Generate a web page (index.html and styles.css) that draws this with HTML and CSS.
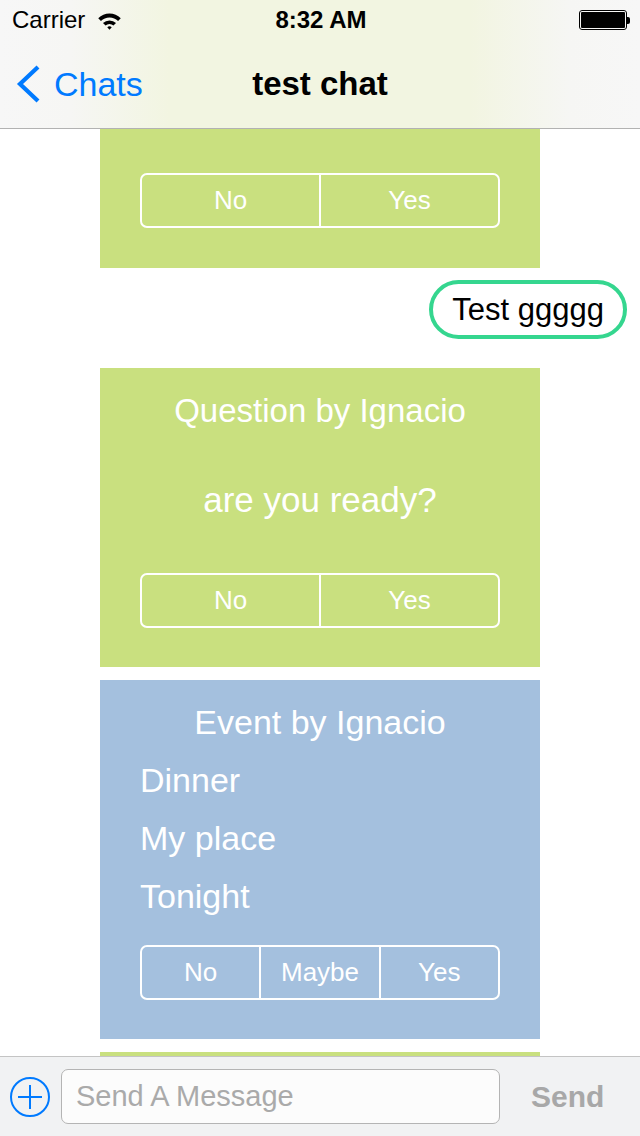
FILE: index.html
```html
<!DOCTYPE html>
<html>
<head>
    <meta charset="utf-8">
    <title>test chat</title>
    <link rel="stylesheet" href="styles.css">
</head>
<body>
<div class="phone">

    <div class="topbar">
        <div class="status">
            <div class="status-left">
                <span>Carrier</span>
                <svg class="wifi" width="25" height="18" viewBox="0 0 22 16">
                    <path d="M1 5.5 A14 14 0 0 1 21 5.5 L18.6 8 A10.6 10.6 0 0 0 3.4 8 Z" fill="#000"/>
                    <path d="M5.2 9.8 A8.5 8.5 0 0 1 16.8 9.8 L14.5 12.1 A5.2 5.2 0 0 0 7.5 12.1 Z" fill="#000"/>
                    <path d="M9 13.6 A3 3 0 0 1 13 13.6 L11 15.8 Z" fill="#000"/>
                </svg>
            </div>
            <div class="status-time">8:32 AM</div>
            <div class="status-right">
                <div class="battery"><div class="battery-fill"></div></div>
                <div class="battery-tip"></div>
            </div>
        </div>
        <div class="nav">
            <div class="nav-back">
                <svg width="26" height="40" viewBox="0 0 26 40">
                    <path d="M23 3 L5 20 L23 37" fill="none" stroke="#007aff" stroke-width="4.2"/>
                </svg>
                <span>Chats</span>
            </div>
            <div class="nav-title">test chat</div>
        </div>
    </div>

    <div class="feed">
        <div class="card card-green card-cut">
            <div class="choices">
                <div class="choice">No</div>
                <div class="choice">Yes</div>
            </div>
        </div>

        <div class="bubble-row">
            <div class="bubble">Test ggggg</div>
        </div>

        <div class="card card-green card-question">
            <div class="card-title">Question by Ignacio</div>
            <div class="question">are you ready?</div>
            <div class="choices">
                <div class="choice">No</div>
                <div class="choice">Yes</div>
            </div>
        </div>

        <div class="card card-blue card-event">
            <div class="card-title">Event by Ignacio</div>
            <div class="detail">Dinner</div>
            <div class="detail">My place</div>
            <div class="detail">Tonight</div>
            <div class="choices">
                <div class="choice">No</div>
                <div class="choice">Maybe</div>
                <div class="choice">Yes</div>
            </div>
        </div>

        <div class="card card-green card-next"></div>
    </div>

    <div class="composer">
        <svg class="plus" width="42" height="42" viewBox="0 0 42 42">
            <circle cx="21" cy="21" r="19" fill="none" stroke="#007aff" stroke-width="2"/>
            <path d="M21 9 V33 M9 21 H33" stroke="#007aff" stroke-width="2"/>
        </svg>
        <div class="input">Send A Message</div>
        <div class="send">Send</div>
    </div>

</div>
</body>
</html>
```

FILE: styles.css
```css
html, body {
    margin: 0;
    padding: 0;
    background: #fff;
}
body {
    font-family: "Liberation Sans", Arial, sans-serif;
}
.phone {
    width: 640px;
    height: 1136px;
    overflow: hidden;
    display: flex;
    flex-direction: column;
    background: #fff;
}

/* top bar */
.topbar {
    height: 128px;
    border-bottom: 1px solid #b2b2b2;
    background: linear-gradient(to right, #f7f7f7 0, #f6f6f4 70px, #f2f5e1 170px, #f2f5e1 470px, #f6f6f4 570px, #f7f7f7 640px);
    flex-shrink: 0;
}
.status {
    height: 40px;
    display: flex;
    align-items: center;
    justify-content: space-between;
    padding: 0 10px 0 12px;
    font-size: 24px;
    color: #000;
}
.status-left {
    display: flex;
    align-items: center;
    gap: 12px;
    width: 160px;
}
.wifi {
    margin-top: 1px;
}
.status-time {
    font-weight: bold;
    font-size: 24px;
}
.status-right {
    width: 160px;
    display: flex;
    justify-content: flex-end;
    align-items: center;
}
.battery {
    width: 44px;
    height: 16px;
    border: 1px solid #000;
    border-radius: 3px;
    padding: 1px;
}
.battery-fill {
    width: 100%;
    height: 100%;
    background: #000;
    border-radius: 1px;
}
.battery-tip {
    width: 3px;
    height: 7px;
    background: #000;
    border-radius: 0 2px 2px 0;
}
.nav {
    height: 88px;
    display: flex;
    align-items: center;
    position: relative;
}
.nav-back {
    display: flex;
    align-items: center;
    gap: 13px;
    padding-left: 15px;
    color: #007aff;
    font-size: 34px;
}
.nav-title {
    position: absolute;
    left: 0;
    right: 0;
    text-align: center;
    font-size: 33px;
    font-weight: bold;
    pointer-events: none;
}

/* messages */
.feed {
    flex: 1;
    overflow: hidden;
    display: flex;
    flex-direction: column;
}
.card {
    width: 440px;
    margin-left: 100px;
    box-sizing: border-box;
    padding: 0 40px;
    color: #fff;
    flex-shrink: 0;
}
.card-green {
    background: #c9e07f;
}
.card-blue {
    background: #a4c0de;
}
.card-cut {
    height: 139px;
    padding-top: 44px;
}
.card-question {
    height: 299px;
    margin-top: 29px;
    padding-top: 21px;
}
.card-event {
    height: 359px;
    margin-top: 13px;
    padding-top: 20px;
}
.card-next {
    height: 60px;
    margin-top: 13px;
}
.card-title {
    text-align: center;
    font-size: 33px;
    line-height: 44px;
}
.card-event .card-title {
    font-size: 34px;
    margin-bottom: 7px;
}
.question {
    text-align: center;
    font-size: 35px;
    line-height: 44px;
    margin-top: 45px;
}
.detail {
    font-size: 34px;
    line-height: 58px;
}
.choices {
    display: flex;
    width: 360px;
    height: 55px;
    box-sizing: border-box;
    border: 2px solid #fff;
    border-radius: 7px;
}
.card-question .choices {
    margin-top: 51px;
}
.card-event .choices {
    margin-top: 20px;
}
.choice {
    flex: 1;
    display: flex;
    align-items: center;
    justify-content: center;
    font-size: 26px;
    color: #fff;
}
.choice + .choice {
    border-left: 2px solid #fff;
}

.bubble-row {
    display: flex;
    justify-content: flex-end;
    padding-right: 13px;
    margin-top: 12px;
    flex-shrink: 0;
}
.bubble {
    height: 59px;
    box-sizing: border-box;
    border: 4px solid #35d68f;
    border-radius: 30px;
    padding: 0 19px 0 19px;
    display: flex;
    align-items: center;
    font-size: 31px;
    color: #000;
}

/* composer */
.composer {
    height: 79px;
    border-top: 1px solid #c4c4c4;
    background: #f1f2f3;
    display: flex;
    align-items: center;
    padding-left: 9px;
    flex-shrink: 0;
}
.plus {
    flex-shrink: 0;
}
.input {
    margin-left: 10px;
    width: 439px;
    height: 55px;
    box-sizing: border-box;
    border: 1px solid #b4b4b4;
    border-radius: 7px;
    background: #fcfcfc;
    display: flex;
    align-items: center;
    padding-left: 14px;
    font-size: 29px;
    color: #aaaaaa;
}
.send {
    margin-left: 31px;
    font-size: 30px;
    font-weight: bold;
    color: #a8a8a8;
}
```
